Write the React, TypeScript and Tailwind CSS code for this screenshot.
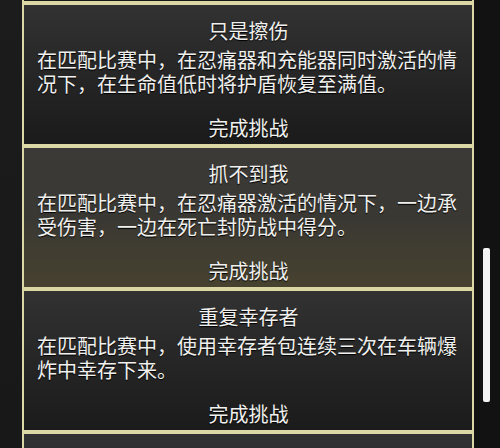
import React from 'react';

type Challenge = {
  title: string;
  desc: string;
  tone: 'dark' | 'warm';
};

const CHALLENGES: Challenge[] = [
  {
    title: '只是擦伤',
    desc: '在匹配比赛中，在忍痛器和充能器同时激活的情况下，在生命值低时将护盾恢复至满值。',
    tone: 'dark',
  },
  {
    title: '抓不到我',
    desc: '在匹配比赛中，在忍痛器激活的情况下，一边承受伤害，一边在死亡封防战中得分。',
    tone: 'warm',
  },
  {
    title: '重复幸存者',
    desc: '在匹配比赛中，使用幸存者包连续三次在车辆爆炸中幸存下来。',
    tone: 'dark',
  },
];

function ChallengeCard({ item }: { item: Challenge }) {
  const bg =
    item.tone === 'warm'
      ? 'bg-gradient-to-b from-[#3b3a37] via-[#3a3833] to-[#47422f]'
      : 'bg-gradient-to-b from-[#323233] via-[#262627] to-[#1b1b1b]';

  return (
    <div className={`border-2 border-[#dcd8a6] ${bg} pt-[14px] pb-[4px] pl-[13px] pr-[12px] text-[#f0f0ee] [text-shadow:0_1px_1px_#000]`}>
      <div className="text-center text-[20px] leading-6">{item.title}</div>
      <p className="mt-[5px] h-12 text-[20px] leading-6">{item.desc}</p>
      <div className="mt-5 text-center text-[20px] leading-6">完成挑战</div>
    </div>
  );
}

export default function App() {
  return (
    <div
      className="flex h-[448px] w-[500px] overflow-hidden bg-[#121212]"
      style={{ fontFamily: '"Noto Sans CJK SC", "Noto Sans", sans-serif' }}
    >
      {/* left gutter */}
      <div className="w-[22px] shrink-0 bg-gradient-to-b from-[#1c1c1c] to-[#181818]" />

      {/* list */}
      <div className="flex w-[452px] shrink-0 flex-col">
        <div className="h-[143px] -mt-[140px] shrink-0 border-2 border-[#dcd8a6] bg-gradient-to-b from-[#2a2a2a] to-[#1a1a16]" />
        {CHALLENGES.map((c) => (
          <ChallengeCard key={c.title} item={c} />
        ))}
        <div className="h-[60px] shrink-0 border-2 border-[#dcd8a6] bg-gradient-to-b from-[#313133] to-[#2a2a2a]" />
      </div>

      {/* scrollbar */}
      <div className="flex-1 pt-[248px] pl-[9px]">
        <div className="h-[154px] w-[7px] rounded-[2px] bg-[#f4f4f4]" />
      </div>
    </div>
  );
}
